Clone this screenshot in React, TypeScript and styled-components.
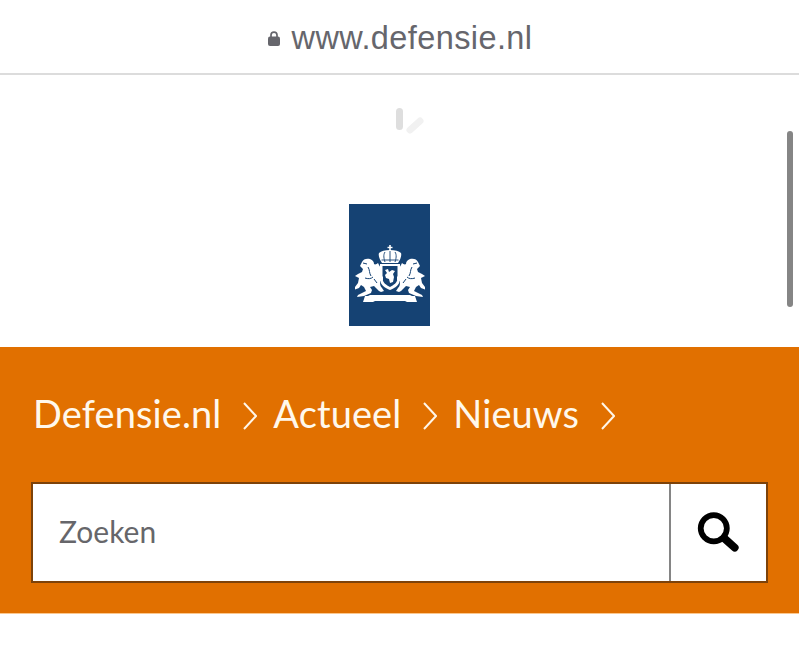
import React from 'react';
import styled, { createGlobalStyle } from 'styled-components';

const GlobalStyle = createGlobalStyle`
  html, body {
    margin: 0;
    padding: 0;
    background: #ffffff;
  }
  body {
    width: 799px;
    height: 646px;
    overflow: hidden;
    font-family: "Noto Sans", sans-serif;
  }
`;

const crumbs = ['Defensie.nl', 'Actueel', 'Nieuws'];

const Lion: React.FC = () => (
  <g>
    <path
      fill="#ffffff"
      d="M7 17c1-3 5-4 8-3 3 1 4 3 4 5 1 1 3 0 4-1l1 2c1 1 1 3 3 4v3l-2 1c1 2 2 3 3 4v3l-3 1c0 3 0 5 2 7l2 3-3 1-2-1-5-5-4 1 2 3-1 3-7 3-7 1 1-2 4-2 4-2-2-4-3-2-2 3-5 2 1-3 3-4 1-5-4-2 3-2 4-2 1-3-3-3 1-2z"
    />
    <path
      fill="none"
      stroke="#154273"
      strokeWidth="1"
      d="M13 22c2 3 1 6 3 9M10 33c3 1 6 1 8-1M8 18l4 1M19 34l3 4"
    />
  </g>
);

const App: React.FC = () => (
  <Page>
    <GlobalStyle />
    <AddressBar>
      <LockIcon viewBox="0 0 14 16">
        <path d="M4 7V4.6a3 3 0 0 1 6 0V7" fill="none" stroke="#66666c" strokeWidth="1.7" />
        <rect x="1" y="6" width="12" height="9.4" rx="2" fill="#66666c" />
      </LockIcon>
      <Url>www.defensie.nl</Url>
    </AddressBar>
    <Spinner viewBox="0 0 32 32">
      <rect x="2" y="1" width="7" height="22" rx="3.5" fill="#dedede" />
      <path d="M16 23l10-9" stroke="#f1f1f1" strokeWidth="7" strokeLinecap="round" />
    </Spinner>
    <ScrollThumb />
    <LogoArea>
      <Logo>
        <Crest viewBox="0 0 70 60">
          {/* crown */}
          <g fill="#ffffff">
            <rect x="34.2" y="0" width="1.6" height="6" />
            <rect x="32.5" y="1.8" width="5" height="1.4" />
            <path d="M35 5c5 0 9 1 11 3 1 3-1 7-3 10H27c-2-3-4-7-3-10 2-2 6-3 11-3z" />
          </g>
          <path
            fill="none"
            stroke="#154273"
            strokeWidth="0.9"
            d="M30 7c-2 3-1 7 0 10M35 6v11M40 7c2 3 1 7 0 10M26.500 15h17"
          />
          {/* shield */}
          <path fill="#ffffff" d="M25 19h20v15c0 6-5 9-10 11-5-2-10-5-10-11z" />
          <path fill="#154273" d="M27.500 21h15v12c0 5-4 7-7.500 9-3.500-2-7.500-4-7.500-9z" />
          <path
            fill="#ffffff"
            d="M30 25l3-1 1 3 3-2 3 1-2 3 1 3-1 5-3 1-1-4-3-1-1-3 2-2z"
          />
          {/* supporters */}
          <Lion />
          <g transform="translate(70 0) scale(-1 1)">
            <Lion />
          </g>
          {/* motto ribbon */}
          <path fill="#ffffff" d="M10 51h3l2-1h40l2 1h3l2 6H52l-2-1H20l-2 1H8z" />
        </Crest>
      </Logo>
    </LogoArea>
    <Banner>
      <Breadcrumb>
        {crumbs.map((crumb) => (
          <Crumb key={crumb}>
            {crumb}
            <Chevron viewBox="0 0 14 28">
              <path d="M1 1l12 13L1 27" fill="none" stroke="#fff6e8" strokeWidth="2" />
            </Chevron>
          </Crumb>
        ))}
      </Breadcrumb>
      <SearchBox>
        <SearchText>Zoeken</SearchText>
        <SearchButton>
          <svg width="46" height="44" viewBox="0 0 44 42">
            <circle cx="17" cy="16.500" r="12.500" fill="none" stroke="#000000" strokeWidth="5.500" />
            <path d="M27 26l10 9" fill="none" stroke="#000000" strokeWidth="7.500" strokeLinecap="round" />
          </svg>
        </SearchButton>
      </SearchBox>
    </Banner>
  </Page>
);

const Page = styled.div`
  position: relative;
  width: 799px;
  height: 646px;
  overflow: hidden;
  background: #ffffff;
`;

const AddressBar = styled.header`
  height: 70px;
  padding-top: 3px;
  display: flex;
  align-items: center;
  justify-content: center;
  gap: 11px;
  border-bottom: 2px solid #dcdcdc;
  background: #ffffff;
`;

const LockIcon = styled.svg`
  width: 14px;
  height: 17px;
  margin-top: 1px;
`;

const Url = styled.span`
  font-family: "Liberation Sans", Arial, sans-serif;
  font-size: 32.500px;
  letter-spacing: 0.4px;
  color: #66666c;
`;

const Spinner = styled.svg`
  position: absolute;
  left: 394px;
  top: 107px;
  width: 32px;
  height: 32px;
`;

const ScrollThumb = styled.div`
  position: absolute;
  left: 787px;
  top: 131px;
  width: 6px;
  height: 176px;
  border-radius: 3px;
  background: #858585;
`;

const LogoArea = styled.div`
  height: 272px;
  box-sizing: border-box;
  padding-top: 129px;
  padding-left: 349px;
`;

const Logo = styled.div`
  width: 81px;
  height: 122px;
  box-sizing: border-box;
  padding-top: 41px;
  display: flex;
  justify-content: center;
  background: #154273;
`;

const Crest = styled.svg`
  width: 70px;
  height: 60px;
`;

const Banner = styled.section`
  height: 267px;
  box-sizing: border-box;
  padding: 44px 31px 0;
  background: #e17000;
  border-bottom: 1px solid #fbc88f;
`;

const Breadcrumb = styled.nav`
  display: flex;
  height: 44px;
  align-items: center;
  padding-left: 2px;
  gap: 16px;
`;

const Crumb = styled.span`
  display: flex;
  align-items: center;
  gap: 22px;
  font-family: "Lato", sans-serif;
  font-size: 38px;
  line-height: 44px;
  letter-spacing: 0.1px;
  color: #fff8ec;
`;

const Chevron = styled.svg`
  width: 14px;
  height: 28px;
  margin-top: 6px;
`;

const SearchBox = styled.div`
  display: flex;
  margin-top: 47px;
  width: 737px;
  height: 101px;
  box-sizing: border-box;
  border: 2px solid #7d4209;
  background: #ffffff;
`;

const SearchText = styled.div`
  flex: 1;
  display: flex;
  align-items: center;
  padding-left: 26px;
  padding-bottom: 3px;
  font-family: "Lato", sans-serif;
  font-size: 30px;
  color: #66666a;
`;

const SearchButton = styled.div`
  width: 95px;
  display: flex;
  align-items: center;
  justify-content: center;
  border-left: 2px solid #858585;
`;

export default App;
